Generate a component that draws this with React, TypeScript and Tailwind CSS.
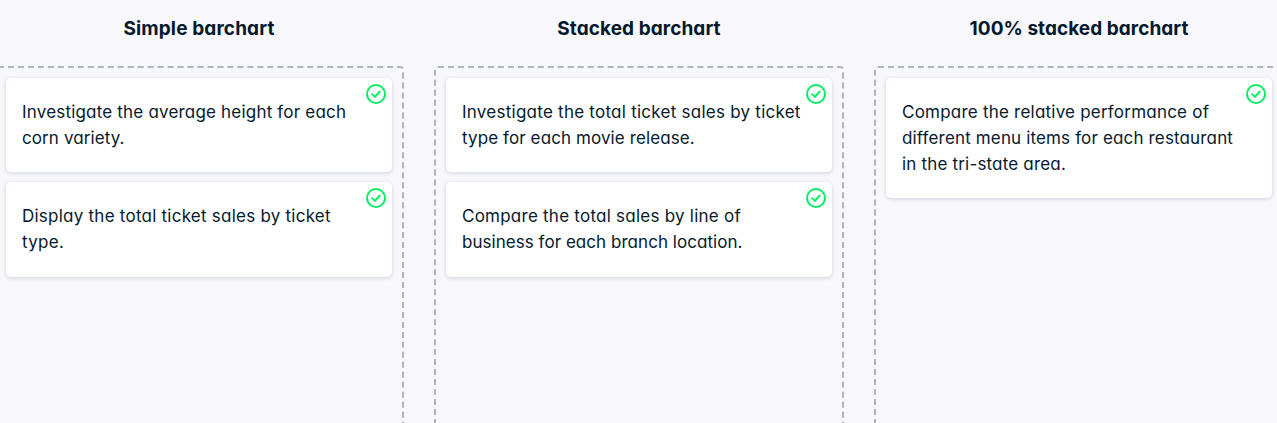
type Line = { text: string; tracking: string };
type Column = { title: string; titleTracking: string; cards: Line[][] };

const columns: Column[] = [
  {
    title: "Simple barchart",
    titleTracking: "tracking-[0.13px]",
    cards: [
      [
        { text: "Investigate the average height for each", tracking: "tracking-[0.19px]" },
        { text: "corn variety.", tracking: "tracking-[0.1px]" },
      ],
      [
        { text: "Display the total ticket sales by ticket", tracking: "tracking-[0.24px]" },
        { text: "type.", tracking: "tracking-[0.3px]" },
      ],
    ],
  },
  {
    title: "Stacked barchart",
    titleTracking: "tracking-[0.08px]",
    cards: [
      [
        { text: "Investigate the total ticket sales by ticket", tracking: "tracking-[0.25px]" },
        { text: "type for each movie release.", tracking: "tracking-[0.1px]" },
      ],
      [
        { text: "Compare the total sales by line of", tracking: "tracking-[0.24px]" },
        { text: "business for each branch location.", tracking: "tracking-[0.04px]" },
      ],
    ],
  },
  {
    title: "100% stacked barchart",
    titleTracking: "tracking-[0.05px]",
    cards: [
      [
        { text: "Compare the relative performance of", tracking: "tracking-[0.22px]" },
        { text: "different menu items for each restaurant", tracking: "tracking-[0.15px]" },
        { text: "in the tri-state area.", tracking: "tracking-[0.18px]" },
      ],
    ],
  },
];

function CheckIcon() {
  return (
    <svg className="absolute top-1.5 right-1.5" width="20" height="20" viewBox="0 0 20 20" fill="none" stroke="#03ef62" strokeWidth="2">
      <circle cx="10" cy="10" r="9" />
      <path d="M6.3 10.4 8.9 12.9 13.6 7.8" strokeLinecap="round" />
    </svg>
  );
}

export default function App() {
  return (
    <div className="h-[423px] w-full overflow-hidden bg-[#f7f7fc] font-['Inter',sans-serif] text-[#05192d] [font-feature-settings:'cv11']">
      <div className="-ml-1.5 flex gap-[30px]">
        {columns.map((col) => (
          <section key={col.title} className="w-[410px] shrink-0">
            <h2 className="flex h-[66px] justify-center pt-[17px] text-[19px] leading-6 font-bold whitespace-nowrap">
              <span className={col.titleTracking}>{col.title}</span>
            </h2>
            <div className="flex h-[480px] flex-col gap-2.5 rounded-[4px] border-2 border-dashed border-[#aeb5bf] p-2.5">
              {col.cards.map((lines) => (
                <div
                  key={lines[0].text}
                  className="relative w-[386px] rounded-[5px] bg-white px-4 pt-[21px] pb-[21.3px] text-[17px] leading-[26px] shadow-[0_1px_4px_rgba(5,25,45,0.16)]"
                >
                  {lines.map((line) => (
                    <p key={line.text} className="whitespace-nowrap">
                      <span className={line.tracking}>{line.text}</span>
                    </p>
                  ))}
                  <CheckIcon />
                </div>
              ))}
            </div>
          </section>
        ))}
      </div>
    </div>
  );
}
